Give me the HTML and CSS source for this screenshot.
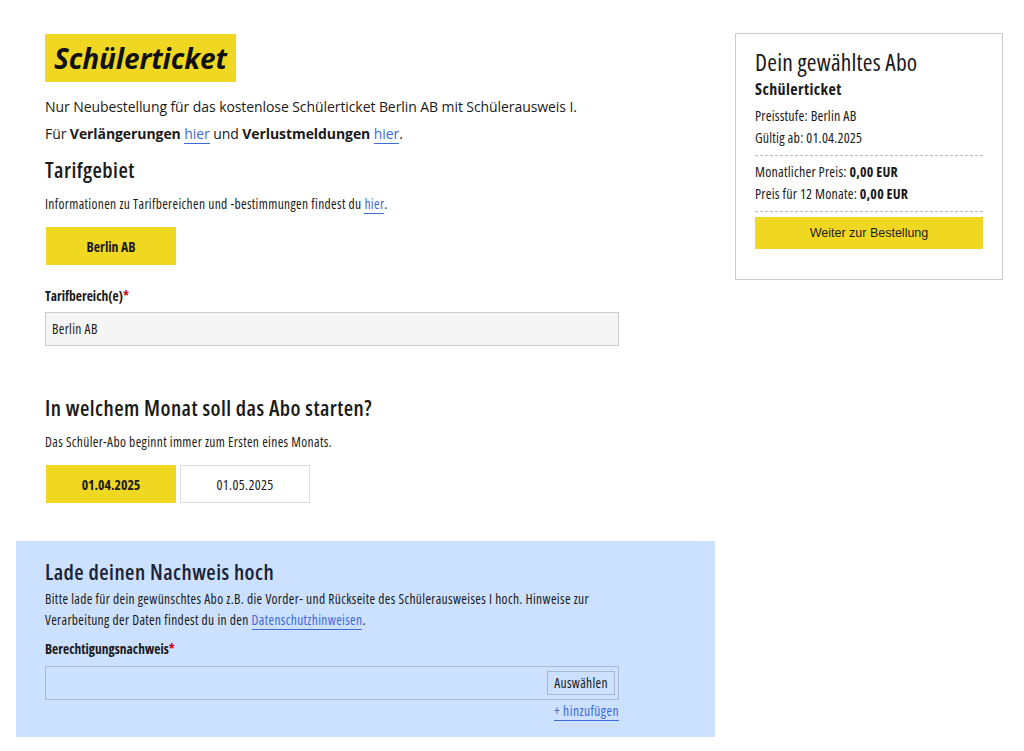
FILE: index.html
```html
<!DOCTYPE html>
<html lang="de">
<head>
<meta charset="utf-8">
<title>Schülerticket</title>
<link rel="stylesheet" href="styles.css">
</head>
<body>
<div class="page">
  <main class="main">
    <section class="sec intro">
      <h1 class="title">Schülerticket</h1>
      <p class="lead">Nur Neubestellung für das kostenlose Schülerticket Berlin AB mit Schülerausweis I.</p>
      <p class="lead">Für <b>Verlängerungen</b> <a href="#">hier</a> und <b>Verlustmeldungen</b> <a href="#">hier</a>.</p>
      <h2 class="h2">Tarifgebiet</h2>
      <p class="small">Informationen zu Tarifbereichen und -bestimmungen findest du <a href="#">hier</a>.</p>
      <div class="choices">
        <button class="choice active">Berlin AB</button>
      </div>
      <label class="label">Tarifbereich(e)<span class="req">*</span></label>
      <div class="field">Berlin AB</div>
    </section>
    <section class="sec month">
      <h2 class="h2">In welchem Monat soll das Abo starten?</h2>
      <p class="small">Das Schüler-Abo beginnt immer zum Ersten eines Monats.</p>
      <div class="choices">
        <button class="choice active">01.04.2025</button>
        <button class="choice">01.05.2025</button>
      </div>
    </section>
    <section class="sec upload">
      <h2 class="h2">Lade deinen Nachweis hoch</h2>
      <p class="small para">Bitte lade für dein gewünschtes Abo z.B. die Vorder- und Rückseite des Schülerausweises I hoch. Hinweise zur Verarbeitung der Daten findest du in den <a href="#">Datenschutzhinweisen</a>.</p>
      <label class="label">Berechtigungsnachweis<span class="req">*</span></label>
      <div class="file">
        <span class="pick">Auswählen</span>
      </div>
      <div class="addrow"><a href="#">+ hinzufügen</a></div>
    </section>
  </main>
  <aside class="side">
    <div class="card">
      <div class="card-title">Dein gewähltes Abo</div>
      <div class="card-name">Schülerticket</div>
      <div class="card-line">Preisstufe: Berlin AB</div>
      <div class="card-line">Gültig ab: 01.04.2025</div>
      <hr class="dash">
      <div class="card-line">Monatlicher Preis: <b>0,00 EUR</b></div>
      <div class="card-line">Preis für 12 Monate: <b>0,00 EUR</b></div>
      <hr class="dash">
      <button class="next">Weiter zur Bestellung</button>
    </div>
  </aside>
</div>
</body>
</html>
```
FILE: styles.css
```css
* { box-sizing: border-box; }
html, body { margin: 0; padding: 0; background: #fff; }
body {
  font-family: "Open Sans", "DejaVu Sans Condensed", sans-serif;
  font-stretch: 75%;
  color: #1a1a1a;
}
.page {
  display: flex;
  gap: 20px;
  padding: 33px 0 0 16px;
  align-items: flex-start;
}
.main { width: 699px; }
.sec { padding: 0 29px; }
.title {
  display: inline-block;
  margin: 1px 0 0;
  background: #f0d722;
  font-size: 28px;
  font-style: italic;
  font-weight: 700;
  font-stretch: 89%;
  letter-spacing: -0.1px;
  line-height: 48px;
  padding: 0 9px;
  color: #111;
}
.lead { margin: 0; font-size: 14px; line-height: 27px; font-stretch: 89%; letter-spacing: -0.08px; }
.lead:first-of-type { margin-top: 11px; }
b { font-weight: 700; }
.lead b { font-stretch: 89%; }
a { color: #3d6ad6; text-decoration: none; border-bottom: 1px solid #3d6ad6; }
.h2 { font-size: 21.5px; font-weight: 600; letter-spacing: 0.45px; margin: 8px 0 0; line-height: 30px; }
.small { font-size: 13.5px; letter-spacing: 0.35px; line-height: 22px; margin: 8px 0 0; }
.choices { display: flex; gap: 4px; margin-top: 12px; padding-left: 1px; }
.choice {
  width: 130px; height: 38px;
  font-family: inherit; font-stretch: 75%;
  font-size: 14px; letter-spacing: 0.3px;
  background: #fff; border: 1px solid #ddd; color: #1a1a1a;
}
.choice.active { background: #f0d722; border-color: #f0d722; font-weight: 700; font-size: 13.75px; letter-spacing: 0; }
.label { display: block; font-size: 13.5px; font-weight: 700; margin-top: 22px; line-height: 18px; }
.req { color: #d0021b; }
.field {
  margin-top: 7px;
  width: 574px; height: 34px;
  background: #f5f5f5; border: 1px solid #ccc;
  font-size: 13.5px; letter-spacing: 0.35px; line-height: 32px; padding: 0 6px;
}
.month { margin-top: 47px; }
.upload {
  margin-top: 38px;
  background: #cce0ff;
  padding-top: 16px;
  padding-bottom: 17px;
}
.upload .h2 { margin-top: 0; color: #1a2438; }
.upload .para { margin-top: 2px; line-height: 21px; max-width: 574px; }
.upload .label { margin-top: 9px; }
.file {
  margin-top: 8px;
  width: 574px; height: 34px;
  border: 1px solid #a9b8cc;
  display: flex; justify-content: flex-end; align-items: center;
  padding-right: 3px;
}
.pick {
  font-size: 13.5px; letter-spacing: 0.35px; border: 1px solid #a9b8cc;
  padding: 3px 6px; line-height: 16px;
}
.addrow { width: 574px; text-align: right; font-size: 13.5px; letter-spacing: 0.45px; margin-top: 2px; line-height: 18px; }
.side { width: 268px; }
.card {
  border: 1px solid #ccc;
  padding: 14px 19px 30px;
}
.card-title { font-size: 23.5px; letter-spacing: 0.2px; line-height: 28px; }
.card-name { font-size: 16px; font-weight: 700; letter-spacing: 0.4px; margin-top: 3px; line-height: 20px; }
.card-line { font-size: 14px; letter-spacing: 0.2px; line-height: 22px; }
.card-name + .card-line { margin-top: 6px; }
.dash { border: 0; border-top: 1px dashed #bbb; margin: 6px 0 5px; }
.next {
  width: 100%; height: 32px;
  background: #f0d722; border: 0;
  font-family: "Liberation Sans", Arial, sans-serif;
  font-size: 12.5px; color: #222;
}
```
